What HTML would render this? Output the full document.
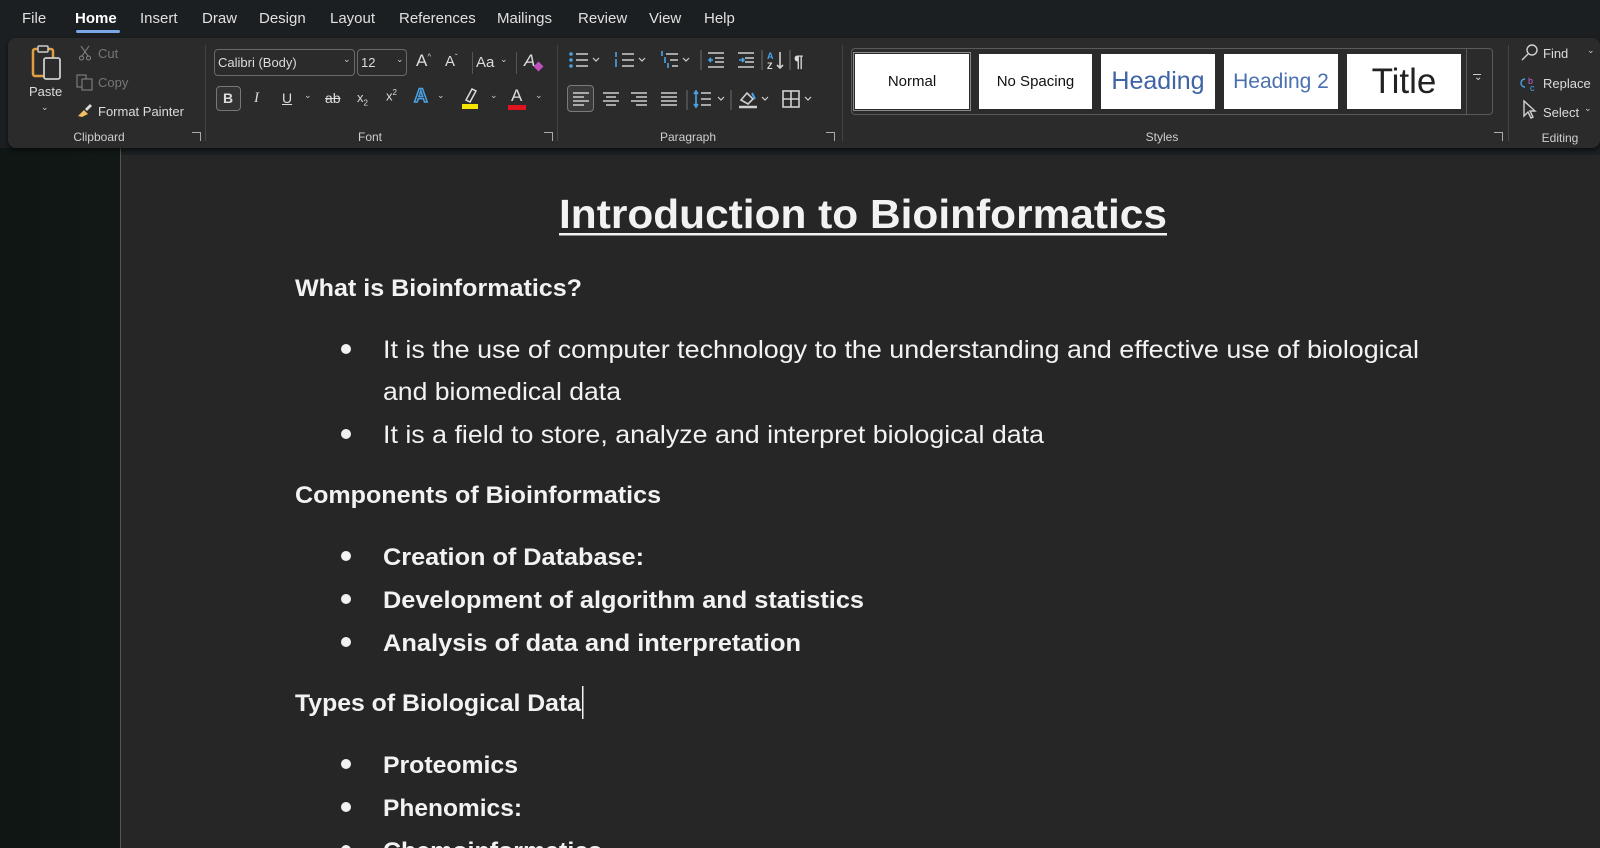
<!DOCTYPE html>
<html><head><meta charset="utf-8"><style>
*{margin:0;padding:0;box-sizing:border-box}
body{width:1600px;height:848px;overflow:hidden;background:#262626;font-family:"Liberation Sans",sans-serif;position:relative;color:#d8d8d8}
.top{position:absolute;left:0;top:0;width:1600px;height:155px;background:#1b1f21}
.tab{position:absolute;top:10px;font-size:15px;color:#e0e0e0}
.rib{position:absolute;left:8px;top:38px;width:1592px;height:110px;background:#2b2b2b;border-radius:8px;box-shadow:0 2px 4px rgba(0,0,0,.6)}
.a{position:absolute;font-size:13px;color:#dcdcdc;white-space:nowrap}
.lbl{position:absolute;top:130px;font-size:12px;color:#cfcfcf;transform:translateX(-50%)}
.sep{position:absolute;top:45px;width:1px;height:96px;background:#444}
.lnch{position:absolute;top:132px;width:9px;height:9px;border:1px solid #aaa;border-top:none;border-right:none;transform:rotate(180deg)}
.chev{position:absolute;font-size:9px;color:#ccc}
.sb{position:absolute;top:54px;height:55px;background:#fff;display:flex;align-items:center;justify-content:center;color:#111}
.side{position:absolute;left:0;top:148px;width:120px;height:700px;background:linear-gradient(90deg,#0f1614,#121816)}
.edge{position:absolute;left:120px;top:148px;width:1px;height:700px;background:#555}
.ic{position:absolute}
</style></head><body>
<div class="top"></div>
<span class="tab" style="left:22px">File</span>
<span class="tab" style="left:75px;font-weight:bold;color:#fff">Home</span>
<div style="position:absolute;left:76px;top:30px;width:44px;height:3px;background:#7aa7e8;border-radius:2px"></div>
<span class="tab" style="left:140px">Insert</span>
<span class="tab" style="left:202px">Draw</span>
<span class="tab" style="left:259px">Design</span>
<span class="tab" style="left:330px">Layout</span>
<span class="tab" style="left:399px">References</span>
<span class="tab" style="left:497px">Mailings</span>
<span class="tab" style="left:578px">Review</span>
<span class="tab" style="left:649px">View</span>
<span class="tab" style="left:704px">Help</span>

<div class="side"></div>
<div class="edge"></div>
<div class="rib"></div>

<!-- Clipboard -->
<svg class="ic" style="left:30px;top:44px" width="36" height="38"><rect x="3" y="5" width="20" height="27" rx="2" fill="none" stroke="#e0a040" stroke-width="2.5"/><rect x="8" y="2" width="10" height="6" rx="1" fill="#2b2b2b" stroke="#ccc" stroke-width="1.5"/><rect x="14" y="14" width="16" height="21" rx="2" fill="#2b2b2b" stroke="#ccc" stroke-width="1.8"/></svg>
<span class="a" style="left:29px;top:84px;font-size:13px">Paste</span>
<span class="chev" style="left:41px;top:102px">&#8964;</span>
<svg class="ic" style="left:78px;top:45px" width="14" height="16"><path d="M3 1 L10 11 M11 1 L4 11" stroke="#888" fill="none"/><circle cx="3.5" cy="13" r="2" stroke="#888" fill="none"/><circle cx="10.5" cy="13" r="2" stroke="#888" fill="none"/></svg>
<span class="a" style="left:98px;top:46px;color:#777">Cut</span>
<svg class="ic" style="left:76px;top:74px" width="18" height="17"><rect x="1" y="1" width="9" height="12" stroke="#888" fill="none"/><rect x="6" y="5" width="10" height="11" stroke="#888" fill="#2b2b2b"/></svg>
<span class="a" style="left:98px;top:75px;color:#777">Copy</span>
<svg class="ic" style="left:76px;top:102px" width="18" height="16"><path d="M2 14 L8 8 L12 12 L6 15 Z" fill="#f0c060"/><path d="M9 7 L14 2 L16 4 L11 9 Z" fill="#ddd"/></svg>
<span class="a" style="left:98px;top:104px">Format Painter</span>
<span class="lbl" style="left:99px">Clipboard</span>
<div class="lnch" style="left:192px"></div>
<div class="sep" style="left:205px"></div>

<!-- Font -->
<div style="position:absolute;left:214px;top:49px;width:141px;height:27px;border:1px solid #6a6a6a;border-radius:4px;background:#2b2b2b"></div>
<span class="a" style="left:218px;top:55px">Calibri (Body)</span><span class="chev" style="left:343px;top:54px">&#8964;</span>
<div style="position:absolute;left:357px;top:49px;width:50px;height:27px;border:1px solid #6a6a6a;border-radius:4px"></div>
<span class="a" style="left:361px;top:55px">12</span><span class="chev" style="left:396px;top:54px">&#8964;</span>
<span class="a" style="left:416px;top:51px;font-size:17px">A<sup style="font-size:8px">^</sup></span>
<span class="a" style="left:445px;top:53px;font-size:15px">A<sup style="font-size:8px">ˇ</sup></span>
<div style="position:absolute;left:472px;top:52px;width:1px;height:22px;background:#555"></div>
<span class="a" style="left:476px;top:54px;font-size:15px">Aa</span><span class="chev" style="left:500px;top:54px">&#8964;</span>
<div style="position:absolute;left:516px;top:52px;width:1px;height:22px;background:#555"></div>
<span class="a" style="left:524px;top:51px;font-size:17px;font-style:italic">A</span><span style="position:absolute;left:535px;top:63px;width:7px;height:7px;background:#c050c0;transform:rotate(45deg)"></span>
<div style="position:absolute;left:216px;top:86px;width:25px;height:25px;border:1px solid #777;border-radius:4px;background:#333"></div>
<span class="a" style="left:223px;top:90px;font-weight:bold;font-size:14px">B</span>
<span class="a" style="left:254px;top:90px;font-style:italic;font-family:'Liberation Serif';font-size:15px">I</span>
<span class="a" style="left:282px;top:90px;text-decoration:underline;font-size:14px">U</span><span class="chev" style="left:304px;top:90px">&#8964;</span>
<span class="a" style="left:325px;top:90px;text-decoration:line-through;font-size:14px">ab</span>
<span class="a" style="left:357px;top:90px;font-size:13px">x<sub style="font-size:8px">2</sub></span>
<span class="a" style="left:386px;top:88px;font-size:13px">x<sup style="font-size:8px">2</sup></span>
<span class="a" style="left:414px;top:86px;font-size:19px;color:#2a2a2a;-webkit-text-stroke:1.5px #4aa3e8;font-weight:bold">A</span><span class="chev" style="left:437px;top:90px">&#8964;</span>
<svg class="ic" style="left:460px;top:86px" width="20" height="24"><path d="M6 14 L12 3 L16 5 L10 16 Z" fill="none" stroke="#ddd" stroke-width="1.5"/><rect x="2" y="18" width="16" height="5" fill="#f5e400"/></svg><span class="chev" style="left:490px;top:90px">&#8964;</span>
<span class="a" style="left:511px;top:86px;font-size:17px">A</span><div style="position:absolute;left:508px;top:105px;width:18px;height:5px;background:#e0141e"></div><span class="chev" style="left:535px;top:90px">&#8964;</span>
<span class="lbl" style="left:370px">Font</span>
<div class="lnch" style="left:544px"></div>
<div class="sep" style="left:557px"></div>

<!-- Paragraph -->
<svg class="ic" style="left:568px;top:50px" width="280" height="64" stroke="#d0d0d0" stroke-width="1.6" fill="none">
<g><circle cx="3" cy="4" r="1.8" fill="#4aa3e8" stroke="none"/><circle cx="3" cy="10" r="1.8" fill="#4aa3e8" stroke="none"/><circle cx="3" cy="16" r="1.8" fill="#4aa3e8" stroke="none"/><path d="M8 4h12M8 10h12M8 16h12"/><path d="M25 8l3 3 3-3" stroke-width="1.2"/></g>
<g transform="translate(46,0)"><path d="M2 2v5M2 9v5M2 14v3" stroke="#4aa3e8"/><path d="M8 4h12M8 10h12M8 16h12"/><path d="M25 8l3 3 3-3" stroke-width="1.2"/></g>
<g transform="translate(92,0)"><path d="M2 1v5M5 7v6M8 13v5" stroke="#4aa3e8"/><path d="M6 4h12M10 10h8M12 16h6"/><path d="M23 8l3 3 3-3" stroke-width="1.2"/></g>
<path d="M133 0v20" stroke="#555"/>
<g transform="translate(140,0)"><path d="M0 3h16M7 8h9M7 12h9M0 17h16"/><path d="M5 10l-4 0 M3 8l-2 2 2 2" stroke="#4aa3e8"/></g>
<g transform="translate(170,0)"><path d="M0 3h16M7 8h9M7 12h9M0 17h16"/><path d="M1 10h5M4 8l2 2-2 2" stroke="#4aa3e8"/></g>
<path d="M194 0v20" stroke="#555"/>
<text x="199" y="9" font-size="9" fill="#4aa3e8" stroke="none" font-weight="bold">A</text><text x="199" y="19" font-size="9" fill="#ddd" stroke="none" font-weight="bold">Z</text><path d="M212 2v16M209 15l3 3 3-3"/>
<path d="M222 0v20" stroke="#555"/>
<text x="226" y="17" font-size="17" fill="#ddd" stroke="none" font-weight="bold">¶</text>
</svg>
<div style="position:absolute;left:567px;top:85px;width:27px;height:27px;border:1px solid #7a7a7a;border-radius:4px;background:#3a3a3a"></div>
<svg class="ic" style="left:572px;top:90px" width="250" height="20" stroke="#d0d0d0" stroke-width="1.6" fill="none">
<path d="M1 3h16M1 7h11M1 11h16M1 15h11"/>
<g transform="translate(30,0)"><path d="M1 3h16M4 7h10M1 11h16M4 15h10"/></g>
<g transform="translate(58,0)"><path d="M1 3h16M6 7h11M1 11h16M6 15h11"/></g>
<g transform="translate(88,0)"><path d="M1 3h16M1 7h16M1 11h16M1 15h16"/></g>
<path d="M115 -2v22" stroke="#555"/>
<g transform="translate(121,0)"><path d="M3 1v16M1 4l2-3 2 3M1 14l2 3 2-3" stroke="#4aa3e8"/><path d="M8 3h10M8 9h10M8 15h10"/><path d="M25 7l3 3 3-3" stroke-width="1.2"/></g>
<path d="M159 -2v22" stroke="#555"/>
<g transform="translate(167,0)"><path d="M2 10l6-7 6 6-5 5z"/><path d="M13 3l3 6" stroke="#4aa3e8" stroke-width="2"/><path d="M0 17h18" stroke-width="2.5"/><path d="M23 7l3 3 3-3" stroke-width="1.2"/></g>
<g transform="translate(210,0)"><rect x="1" y="1" width="16" height="16"/><path d="M9 1v16M1 9h16"/><path d="M23 7l3 3 3-3" stroke-width="1.2"/></g>
</svg>
<span class="lbl" style="left:688px">Paragraph</span>
<div class="lnch" style="left:826px"></div>
<div class="sep" style="left:842px"></div>

<!-- Styles -->
<div style="position:absolute;left:851px;top:48px;width:642px;height:67px;border:1px solid #5a5a5a;border-radius:4px"></div>
<div style="position:absolute;left:853px;top:52px;width:118px;height:59px;border:1px solid #8a8a8a"></div>
<div class="sb" style="left:855px;width:114px;font-size:15px">Normal</div>
<div class="sb" style="left:979px;width:113px;font-size:15px">No Spacing</div>
<div class="sb" style="left:1101px;width:114px;font-size:25px;color:#3e63a6">Heading</div>
<div class="sb" style="left:1224px;width:114px;font-size:21px;color:#4a70b0">Heading 2</div>
<div class="sb" style="left:1347px;width:114px;font-size:35px;color:#222">Title</div>
<div style="position:absolute;left:1466px;top:48px;width:27px;height:67px;border-left:1px solid #5a5a5a"></div>
<span class="a" style="left:1474px;top:72px;font-size:10px">&#8964;</span><div style="position:absolute;left:1473px;top:74px;width:8px;height:1px;background:#ccc"></div>
<span class="lbl" style="left:1162px">Styles</span>
<div class="lnch" style="left:1494px"></div>
<div class="sep" style="left:1508px"></div>

<!-- Editing -->
<svg class="ic" style="left:1520px;top:43px" width="20" height="80" stroke="#d0d0d0" stroke-width="1.4" fill="none">
<circle cx="12" cy="7" r="5"/><path d="M8 11l-6 6"/>
<text x="8" y="41" font-size="9" fill="#c060d0" stroke="none">b</text><path d="M5 36a4 4 0 0 0 0 8" stroke="#4aa3e8"/><text x="10" y="48" font-size="9" fill="#4aa3e8" stroke="none">c</text>
<path d="M4 58l0 15 4-4 3 6 2-1-3-6 5 0z"/>
</svg>
<span class="a" style="left:1543px;top:46px">Find</span><span class="chev" style="left:1587px;top:45px">&#8964;</span>
<span class="a" style="left:1543px;top:76px">Replace</span>
<span class="a" style="left:1543px;top:105px">Select</span><span class="chev" style="left:1584px;top:103px">&#8964;</span>
<span class="lbl" style="left:1560px;top:131px">Editing</span>

<!-- Document -->
<svg style="position:absolute;left:0;top:0" width="1600" height="848" font-family="Liberation Sans, sans-serif" fill="#f2f2f2">
<text x="559" y="228" font-size="41" font-weight="bold" textLength="608" lengthAdjust="spacingAndGlyphs">Introduction to Bioinformatics</text>
<rect x="559" y="233" width="608" height="2.5" fill="#f2f2f2"/>
<text x="295" y="296" font-size="24" font-weight="bold" textLength="287" lengthAdjust="spacingAndGlyphs">What is Bioinformatics?</text>
<circle cx="346" cy="349" r="5"/>
<text x="383" y="358" font-size="25" textLength="1036" lengthAdjust="spacingAndGlyphs">It is the use of computer technology to the understanding and effective use of biological</text>
<text x="383" y="400" font-size="25" textLength="238" lengthAdjust="spacingAndGlyphs">and biomedical data</text>
<circle cx="346" cy="434" r="5"/>
<text x="383" y="443" font-size="25" textLength="661" lengthAdjust="spacingAndGlyphs">It is a field to store, analyze and interpret biological data</text>
<text x="295" y="503" font-size="24" font-weight="bold" textLength="366" lengthAdjust="spacingAndGlyphs">Components of Bioinformatics</text>
<circle cx="346" cy="556" r="5"/>
<text x="383" y="565" font-size="24" font-weight="bold" textLength="261" lengthAdjust="spacingAndGlyphs">Creation of Database:</text>
<circle cx="346" cy="599" r="5"/>
<text x="383" y="608" font-size="24" font-weight="bold" textLength="481" lengthAdjust="spacingAndGlyphs">Development of algorithm and statistics</text>
<circle cx="346" cy="642" r="5"/>
<text x="383" y="651" font-size="24" font-weight="bold" textLength="418" lengthAdjust="spacingAndGlyphs">Analysis of data and interpretation</text>
<text x="295" y="711" font-size="24" font-weight="bold" textLength="286" lengthAdjust="spacingAndGlyphs">Types of Biological Data</text>
<rect x="582" y="686" width="1.5" height="33" fill="#f2f2f2"/>
<circle cx="346" cy="764" r="5"/>
<text x="383" y="773" font-size="24" font-weight="bold" textLength="135" lengthAdjust="spacingAndGlyphs">Proteomics</text>
<circle cx="346" cy="807" r="5"/>
<text x="383" y="816" font-size="24" font-weight="bold" textLength="139" lengthAdjust="spacingAndGlyphs">Phenomics:</text>
<circle cx="346" cy="850" r="5"/>
<text x="383" y="859" font-size="24" font-weight="bold" textLength="219" lengthAdjust="spacingAndGlyphs">Chemoinformatics</text>
</svg>
</body></html>
